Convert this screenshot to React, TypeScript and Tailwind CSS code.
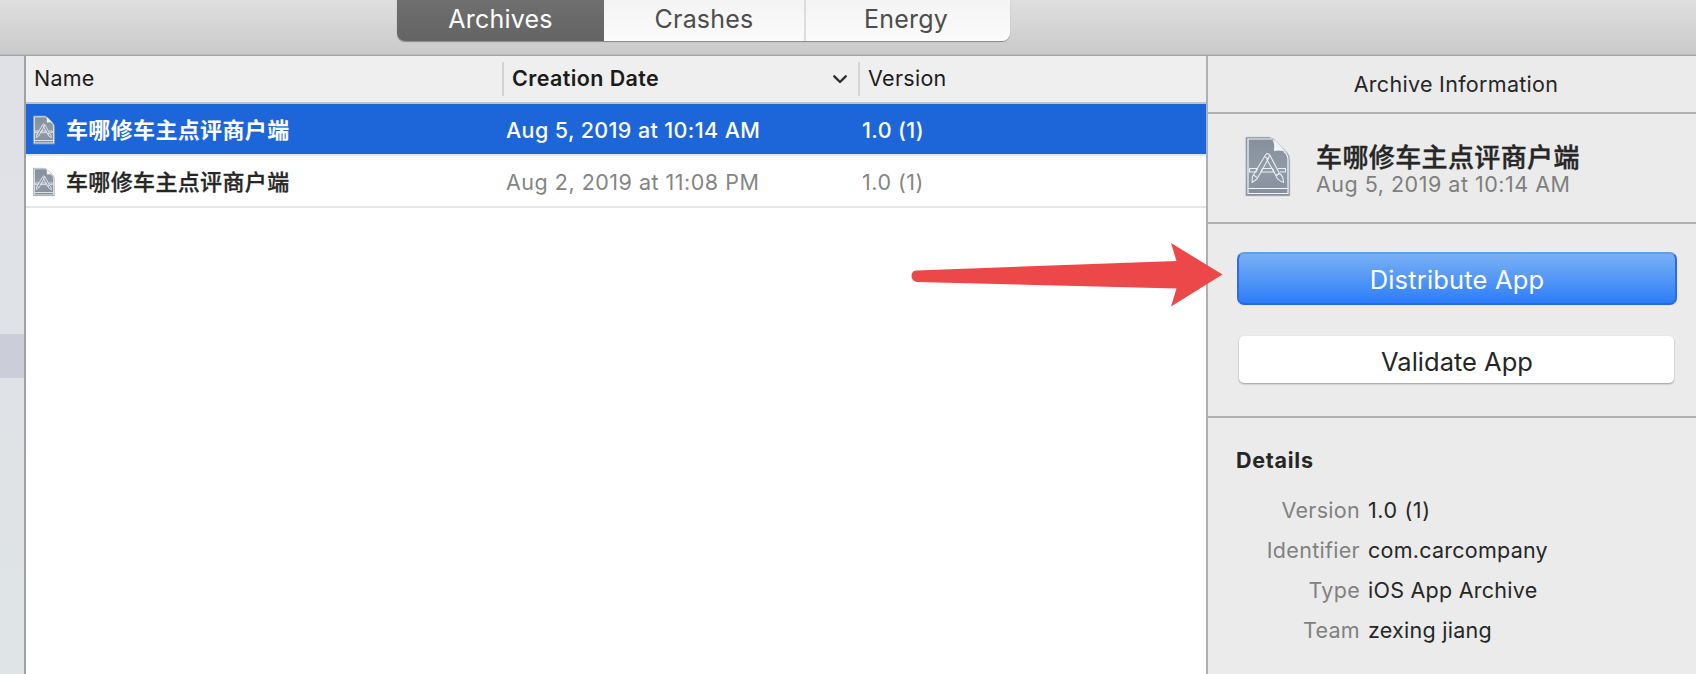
import React from "react";

const FONT = "font-['Inter','Noto_Sans_CJK_SC',sans-serif]";

function ArchiveFileIcon({ className, small = false }: { className?: string; small?: boolean }) {
  const w = small ? 1.7 : 1.1;
  return (
    <svg viewBox="0 0 46 61" className={className} fill="none">
      <defs>
        <linearGradient id="sheet" x1="0" y1="0" x2="0" y2="1">
          <stop offset="0" stopColor="#858f9c" />
          <stop offset="0.55" stopColor="#909ba7" />
          <stop offset="1" stopColor="#858d9a" />
        </linearGradient>
        <linearGradient id="fold" x1="0" y1="1" x2="1" y2="0">
          <stop offset="0" stopColor="#ffffff" />
          <stop offset="1" stopColor="#dcdfe3" />
        </linearGradient>
      </defs>
      <path d="M.7 1H24Q28 2 31 5L41 15Q45 19 45 25V60H.7Z" fill="url(#sheet)" stroke="#c9ced5" strokeWidth=".7" />
      <path d="M27 3Q30 7 29 15Q36 13.500 42 17L31 5Z" fill="url(#fold)" />
      <path d="M27 3H3V57.500H43V24Q43 18.500 39 16" stroke="#f4f7fa" strokeWidth={small ? 1.6 : 1.2} />
      <path d="M3 52.500H43" stroke="#f4f7fa" strokeWidth={small ? 1.6 : 1.2} />
      <g stroke="#e9eef3" strokeWidth={w} strokeLinejoin="round">
        <path d="M4.500 32.500H12.500L11 36H4.500ZM17.500 32.500H27.500L29 36H16ZM33 32.500H40.500V36H35" />
        <path d="M20.800 18.500Q22.500 16.500 24.500 19L23.500 22.500L12 43L7 46.500L7.500 40.500Z" />
        <path d="M20 21L23.500 23M8.500 39L12 41.500" />
        <path d="M24.500 18.500L34.500 37.500L31 39.500L21.500 23" />
        <path d="M31 39.500Q32 44 38.500 46.500Q38.500 40 34.500 37.500Z" />
      </g>
    </svg>
  );
}

const rows = [
  { name: "车哪修车主点评商户端", date: "Aug 5, 2019 at 10:14 AM", version: "1.0 (1)", selected: true },
  { name: "车哪修车主点评商户端", date: "Aug 2, 2019 at 11:08 PM", version: "1.0 (1)", selected: false },
];

const details = [
  ["Version", "1.0 (1)"],
  ["Identifier", "com.carcompany"],
  ["Type", "iOS App Archive"],
  ["Team", "zexing jiang"],
];

function Toolbar() {
  return (
    <header className="flex h-14 shrink-0 items-start border-b border-[#a5a5a5] bg-linear-to-b from-[#dfdfdf] to-[#cacaca] pl-[397px] shadow-[inset_0_-1px_0_#bababa]">
      <div className="flex h-[41px] overflow-hidden rounded-b-[8px] text-[25px] leading-[38px] tracking-[0.2px] text-[#4d4d4d] shadow-[0_1px_1px_rgba(0,0,0,0.35)]">
        <div className="w-[207px] bg-linear-to-b from-[#6f6f6f] to-[#646464] text-center text-white">Archives</div>
        <div className="w-[200px] bg-linear-to-b from-[#f4f4f4] to-[#fbfbfb] text-center">Crashes</div>
        <div className="w-[206px] border-l-2 border-[#dcdcdc] bg-linear-to-b from-[#f4f4f4] to-[#fbfbfb] pr-1 text-center">Energy</div>
      </div>
    </header>
  );
}

function ArchiveTable() {
  return (
    <main className="flex w-[1180px] shrink-0 flex-col bg-white">
      <div className="flex h-12 items-center border-b-2 border-[#c0c3c3] bg-[#efefef] text-[21.500px] text-[#1b1b1b]">
        <div className="w-[476px] pb-0.5 pl-2 tracking-[0.2px]">Name</div>
        <div className="flex h-[34px] w-[356px] items-center justify-between border-l-2 border-[#d4d4d4] pr-[11px] pl-2 font-semibold">
          <span className="pb-0.5 tracking-[0.4px]">Creation Date</span>
          <svg viewBox="0 0 14 9" className="h-[9px] w-[14px]" fill="none" stroke="#303030" strokeWidth="2.400" strokeLinecap="round" strokeLinejoin="round">
            <path d="M1.300 1.300L7 7L12.700 1.300" />
          </svg>
        </div>
        <div className="flex h-[34px] items-center border-l-2 border-[#d4d4d4] pb-0.5 pl-2 tracking-[0.3px]">Version</div>
      </div>
      {rows.map((row) => (
        <div
          key={row.date}
          className={
            row.selected
              ? "flex h-[52px] items-center border-b-2 border-[#e3e9f1] bg-[#1d66da] pt-0.5 text-[21.500px] font-medium tracking-[0.38px] text-white"
              : "flex h-[52px] items-center border-b-2 border-[#e5e5e5] pt-0.5 text-[21.500px] tracking-[0.5px] text-[#858585]"
          }
        >
          <ArchiveFileIcon small className="ml-[7px] h-[30px] w-[22px]" />
          <div
            className={
              row.selected
                ? "ml-[11px] w-[440px] text-[22px] leading-[30px] font-bold tracking-[0.35px]"
                : "ml-[11px] w-[440px] text-[22px] leading-[30px] font-medium tracking-[0.35px] text-[#262626] [-webkit-text-stroke:0.3px_#262626]"
            }
          >
            {row.name}
          </div>
          <div className="w-[356px]">{row.date}</div>
          <div>{row.version}</div>
        </div>
      ))}
    </main>
  );
}

function Inspector() {
  return (
    <aside className="flex min-w-0 flex-1 flex-col border-l-2 border-[#b0b0b0] bg-[#ebebeb] text-[21.500px] tracking-[0.3px] text-[#262626]">
      <div className="flex h-[58px] items-center justify-center border-b-2 border-[#b0b0b0] pl-2">Archive Information</div>
      <div className="flex h-[110px] items-start border-b-2 border-[#b0b0b0] pt-[22px] pl-[37px]">
        <ArchiveFileIcon className="h-[61px] w-[46px]" />
        <div className="ml-[25px] pt-[5px]">
          <div className="text-[26px] leading-[34px] font-medium tracking-[0.38px] [-webkit-text-stroke:0.4px_#262626]">车哪修车主点评商户端</div>
          <div className="-mt-[3px] leading-[24px] tracking-[0.5px] text-[#7f7f7f]">Aug 5, 2019 at 10:14 AM</div>
        </div>
      </div>
      <div className="flex h-[194px] flex-col border-b-2 border-[#b0b0b0] pt-7 pl-[29px] text-[25.500px] tracking-normal">
        <button className="h-[53px] w-[440px] rounded-[7px] border-2 border-t-[#639ee5] border-r-[#2f6be0] border-b-[#2767e4] border-l-[#2f6be0] bg-linear-to-b from-[#78b0f5] to-[#2b7cf8] pt-0.5 leading-[45px] tracking-[0.17px] text-white">
          Distribute App
        </button>
        <button className="mt-[31px] ml-[1.500px] h-[47px] w-[435px] rounded-[5px] bg-white pt-1 pl-0.5 leading-[43px] shadow-[0_1px_2px_rgba(0,0,0,0.35)]">
          Validate App
        </button>
      </div>
      <div className="pt-[28px] pl-[28px]">
        <div className="leading-[28px] font-bold tracking-[0.75px]">Details</div>
        <div className="mt-4">
          {details.map(([label, value]) => (
            <div key={label} className="flex h-10 items-center gap-2">
              <div className="w-[124px] text-right text-[#818181]">{label}</div>
              <div className={label === "Version" ? "tracking-[0.6px]" : "tracking-[0.25px]"}>{value}</div>
            </div>
          ))}
        </div>
      </div>
    </aside>
  );
}

export default function App() {
  return (
    <div className={`relative flex h-[674px] w-[1696px] flex-col overflow-hidden ${FONT}`}>
      <Toolbar />
      <div className="flex min-h-0 flex-1">
        <nav className="w-[26px] shrink-0 border-r-2 border-[#9fa1a4] bg-linear-to-b from-[#e0e1e6] to-[#dfe4e6] pt-[278px]">
          <div className="h-11 bg-[#cbced8]" />
        </nav>
        <ArchiveTable />
        <Inspector />
      </div>
      <svg className="absolute top-[240px] left-[908px] h-[70px] w-[320px]" viewBox="908 240 320 70">
        <path
          d="M916 270.500L1176.500 261L1171 243L1222.500 274.500L1171 306.500L1176.500 288.500L917 282Q911.500 281 911.500 276Q911.500 271 916 270.500Z"
          fill="#ed4849"
        />
      </svg>
    </div>
  );
}
